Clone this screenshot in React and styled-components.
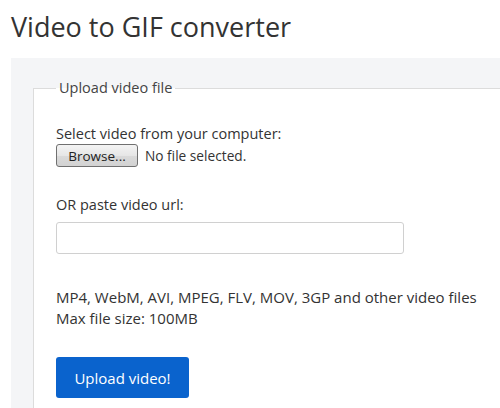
import React from 'react';
import styled, { createGlobalStyle } from 'styled-components';

const GlobalStyle = createGlobalStyle`
    html, body {
        margin: 0;
        padding: 0;
        background: #fff;
        overflow: hidden;
    }
    body {
        font-family: "Open Sans", "Noto Sans", sans-serif;
        color: #333;
    }
    #root {
        display: flex;
        flex-direction: column;
        height: 100vh;
    }
`;

const Title = styled.h1`
    margin: 0;
    padding: 9px 11px 13px;
    font-size: 27px;
    line-height: 36px;
    font-weight: 400;
    color: #333;
`;

const Panel = styled.div`
    flex: 1;
    display: flex;
    margin-left: 11px;
    background: #f4f5f7;
    padding: 20px 0 0 22px;
`;

const FieldSet = styled.fieldset`
    flex: 1;
    margin: 0;
    min-width: 0;
    padding: 26px 22px 0;
    background: #fff;
    border: 1px solid #dcdcdc;
    border-right: none;
    border-bottom: none;
`;

const Legend = styled.legend`
    padding: 0 3px;
    font-size: 14.5px;
    line-height: 20px;
    color: #444;
`;

const Label = styled.div`
    font-size: 14.5px;
    line-height: 20px;
    margin-top: ${p => p.$top || 0}px;
`;

const FileRow = styled.div`
    display: flex;
    align-items: center;
    gap: 7px;
    height: 23px;
    font-size: 13.7px;
`;

const BrowseButton = styled.button`
    height: 23px;
    width: 82px;
    padding: 0;
    font-family: inherit;
    font-size: 13.5px;
    color: #222;
    border: 1px solid #707070;
    border-radius: 3px;
    background: linear-gradient(#f4f4f4, #e6e6e6 50%, #dadada 51%, #d2d2d2);
`;

const UrlInput = styled.input`
    display: block;
    box-sizing: border-box;
    margin-top: 7px;
    width: 348px;
    height: 32px;
    border: 1px solid #d0d0d0;
    border-radius: 3px;
    padding: 0 8px;
    font-family: inherit;
    font-size: 14px;
`;

const Info = styled.div`
    margin-top: 33px;
    font-size: 15px;
    line-height: 21px;
    white-space: nowrap;
`;

const UploadButton = styled.button`
    margin-top: 28px;
    width: 133px;
    height: 41px;
    border: none;
    border-radius: 3px;
    background: #0a63cd;
    color: #fff;
    font-family: inherit;
    font-size: 15px;
    padding: 0;
`;

export default function App() {
    return (
        <>
            <GlobalStyle />
            <Title>Video to GIF converter</Title>
            <Panel>
                <FieldSet>
                    <Legend>Upload video file</Legend>
                    <Label>Select video from your computer:</Label>
                    <FileRow>
                        <BrowseButton type="button">Browse...</BrowseButton>
                        <span>No file selected.</span>
                    </FileRow>
                    <Label $top={28}>OR paste video url:</Label>
                    <UrlInput type="text" />
                    <Info>
                        MP4, WebM, AVI, MPEG, FLV, MOV, 3GP and other video files
                        <br />
                        Max file size: 100MB
                    </Info>
                    <UploadButton type="button">Upload video!</UploadButton>
                </FieldSet>
            </Panel>
        </>
    );
}
